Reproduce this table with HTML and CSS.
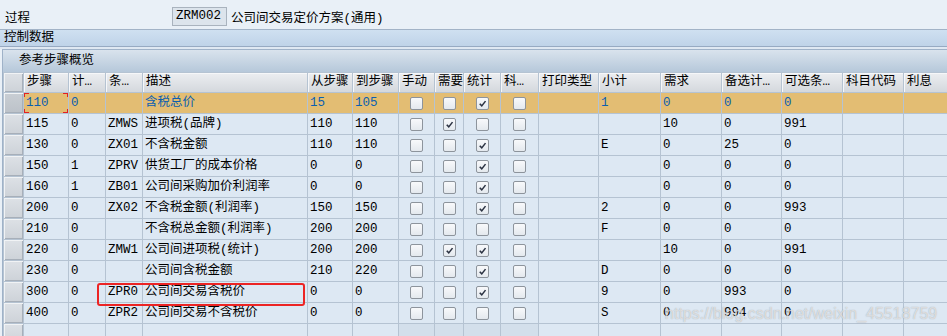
FILE: index.html
```html
<!DOCTYPE html>
<html lang="zh">
<head>
<meta charset="utf-8">
<title>参考步骤概览</title>
<link rel="stylesheet" href="styles.css">
</head>
<body>
<div class="top">
  <span class="lbl">过程</span>
  <span class="inp">ZRM002</span>
  <span class="desc">公司间交易定价方案(通用)</span>
</div>
<div class="band">控制数据</div>
<div class="sep"></div>
<div class="group">
  <div class="gtitle">参考步骤概览</div>
  <div class="tbl">
    <div class="row head">
      <div class="sel"></div><div class="h">步骤</div><div class="h">计…</div><div class="h">条…</div><div class="h">描述</div><div class="h">从步骤</div><div class="h">到步骤</div><div class="h">手动</div><div class="h">需要</div><div class="h">统计</div><div class="h">科…</div><div class="h">打印类型</div><div class="h">小计</div><div class="h">需求</div><div class="h">备选计…</div><div class="h">可选条…</div><div class="h">科目代码</div><div class="h">利息</div>
    </div>
    <div class="row cur">
      <div class="sel"></div><div class="c focus">110</div><div class="c">0</div><div class="c"></div><div class="c">含税总价</div><div class="c">15</div><div class="c">105</div><div class="c cb"><span class="box"></span></div><div class="c cb"><span class="box"></span></div><div class="c cb"><span class="box"><svg viewBox="0 0 12 12"><path d="M3 6.2 L5.2 8.6 L9.3 3.4"/></svg></span></div><div class="c cb"><span class="box"></span></div><div class="c"></div><div class="c">1</div><div class="c">0</div><div class="c">0</div><div class="c">0</div><div class="c"></div><div class="c"></div>
    </div>
    <div class="row">
      <div class="sel"></div><div class="c">115</div><div class="c">0</div><div class="c">ZMWS</div><div class="c">进项税(品牌)</div><div class="c">110</div><div class="c">110</div><div class="c cb"><span class="box"></span></div><div class="c cb"><span class="box"><svg viewBox="0 0 12 12"><path d="M3 6.2 L5.2 8.6 L9.3 3.4"/></svg></span></div><div class="c cb"><span class="box"></span></div><div class="c cb"><span class="box"></span></div><div class="c"></div><div class="c"></div><div class="c">10</div><div class="c">0</div><div class="c">991</div><div class="c"></div><div class="c"></div>
    </div>
    <div class="row">
      <div class="sel"></div><div class="c">130</div><div class="c">0</div><div class="c">ZX01</div><div class="c">不含税金额</div><div class="c">110</div><div class="c">110</div><div class="c cb"><span class="box"></span></div><div class="c cb"><span class="box"></span></div><div class="c cb"><span class="box"><svg viewBox="0 0 12 12"><path d="M3 6.2 L5.2 8.6 L9.3 3.4"/></svg></span></div><div class="c cb"><span class="box"></span></div><div class="c"></div><div class="c">E</div><div class="c">0</div><div class="c">25</div><div class="c">0</div><div class="c"></div><div class="c"></div>
    </div>
    <div class="row">
      <div class="sel"></div><div class="c">150</div><div class="c">1</div><div class="c">ZPRV</div><div class="c">供货工厂的成本价格</div><div class="c">0</div><div class="c">0</div><div class="c cb"><span class="box"></span></div><div class="c cb"><span class="box"></span></div><div class="c cb"><span class="box"><svg viewBox="0 0 12 12"><path d="M3 6.2 L5.2 8.6 L9.3 3.4"/></svg></span></div><div class="c cb"><span class="box"></span></div><div class="c"></div><div class="c"></div><div class="c">0</div><div class="c">0</div><div class="c">0</div><div class="c"></div><div class="c"></div>
    </div>
    <div class="row">
      <div class="sel"></div><div class="c">160</div><div class="c">1</div><div class="c">ZB01</div><div class="c">公司间采购加价利润率</div><div class="c">0</div><div class="c">0</div><div class="c cb"><span class="box"></span></div><div class="c cb"><span class="box"></span></div><div class="c cb"><span class="box"><svg viewBox="0 0 12 12"><path d="M3 6.2 L5.2 8.6 L9.3 3.4"/></svg></span></div><div class="c cb"><span class="box"></span></div><div class="c"></div><div class="c"></div><div class="c">0</div><div class="c">0</div><div class="c">0</div><div class="c"></div><div class="c"></div>
    </div>
    <div class="row">
      <div class="sel"></div><div class="c">200</div><div class="c">0</div><div class="c">ZX02</div><div class="c">不含税金额(利润率)</div><div class="c">150</div><div class="c">150</div><div class="c cb"><span class="box"></span></div><div class="c cb"><span class="box"></span></div><div class="c cb"><span class="box"><svg viewBox="0 0 12 12"><path d="M3 6.2 L5.2 8.6 L9.3 3.4"/></svg></span></div><div class="c cb"><span class="box"></span></div><div class="c"></div><div class="c">2</div><div class="c">0</div><div class="c">0</div><div class="c">993</div><div class="c"></div><div class="c"></div>
    </div>
    <div class="row">
      <div class="sel"></div><div class="c">210</div><div class="c">0</div><div class="c"></div><div class="c">不含税总金额(利润率)</div><div class="c">200</div><div class="c">200</div><div class="c cb"><span class="box"></span></div><div class="c cb"><span class="box"></span></div><div class="c cb"><span class="box"></span></div><div class="c cb"><span class="box"></span></div><div class="c"></div><div class="c">F</div><div class="c">0</div><div class="c">0</div><div class="c">0</div><div class="c"></div><div class="c"></div>
    </div>
    <div class="row">
      <div class="sel"></div><div class="c">220</div><div class="c">0</div><div class="c">ZMW1</div><div class="c">公司间进项税(统计)</div><div class="c">200</div><div class="c">200</div><div class="c cb"><span class="box"></span></div><div class="c cb"><span class="box"><svg viewBox="0 0 12 12"><path d="M3 6.2 L5.2 8.6 L9.3 3.4"/></svg></span></div><div class="c cb"><span class="box"><svg viewBox="0 0 12 12"><path d="M3 6.2 L5.2 8.6 L9.3 3.4"/></svg></span></div><div class="c cb"><span class="box"></span></div><div class="c"></div><div class="c"></div><div class="c">10</div><div class="c">0</div><div class="c">991</div><div class="c"></div><div class="c"></div>
    </div>
    <div class="row">
      <div class="sel"></div><div class="c">230</div><div class="c">0</div><div class="c"></div><div class="c">公司间含税金额</div><div class="c">210</div><div class="c">220</div><div class="c cb"><span class="box"></span></div><div class="c cb"><span class="box"></span></div><div class="c cb"><span class="box"><svg viewBox="0 0 12 12"><path d="M3 6.2 L5.2 8.6 L9.3 3.4"/></svg></span></div><div class="c cb"><span class="box"></span></div><div class="c"></div><div class="c">D</div><div class="c">0</div><div class="c">0</div><div class="c">0</div><div class="c"></div><div class="c"></div>
    </div>
    <div class="row">
      <div class="sel"></div><div class="c">300</div><div class="c">0</div><div class="c">ZPR0</div><div class="c">公司间交易含税价</div><div class="c">0</div><div class="c">0</div><div class="c cb"><span class="box"></span></div><div class="c cb"><span class="box"></span></div><div class="c cb"><span class="box"><svg viewBox="0 0 12 12"><path d="M3 6.2 L5.2 8.6 L9.3 3.4"/></svg></span></div><div class="c cb"><span class="box"></span></div><div class="c"></div><div class="c">9</div><div class="c">0</div><div class="c">993</div><div class="c">0</div><div class="c"></div><div class="c"></div>
    </div>
    <div class="row">
      <div class="sel"></div><div class="c">400</div><div class="c">0</div><div class="c">ZPR2</div><div class="c">公司间交易不含税价</div><div class="c">0</div><div class="c">0</div><div class="c cb"><span class="box"></span></div><div class="c cb"><span class="box"></span></div><div class="c cb"><span class="box"></span></div><div class="c cb"><span class="box"></span></div><div class="c"></div><div class="c">S</div><div class="c">0</div><div class="c">994</div><div class="c">0</div><div class="c"></div><div class="c"></div>
    </div>
    <div class="row empty">
      <div class="sel"></div><div class="c"></div><div class="c"></div><div class="c"></div><div class="c"></div><div class="c"></div><div class="c"></div><div class="c dk"></div><div class="c dk"></div><div class="c dk"></div><div class="c dk"></div><div class="c"></div><div class="c"></div><div class="c"></div><div class="c"></div><div class="c"></div><div class="c"></div><div class="c"></div>
    </div>
  </div>
</div>
<div class="mark"></div>
<div class="wm">https://blog.csdn.net/weixin_45518759</div>
</body>
</html>
```

FILE: styles.css
```css
* { box-sizing: border-box; }

body {
  margin: 0;
  width: 947px;
  height: 336px;
  overflow: hidden;
  position: relative;
  background: #e9f0f7;
  color: #000;
  font-family: "Liberation Mono", "Noto Sans CJK SC", monospace;
  font-size: 12.5px;
}

.top {
  height: 30px;
  padding-top: 4px;
  display: flex;
  align-items: center;
  border-bottom: 1px solid #a2b3c7;
}

.lbl {
  margin-left: 5px;
  width: 167px;
}

.inp {
  width: 55px;
  height: 19px;
  line-height: 17px;
  padding-left: 3px;
  border: 1px solid #a9b3be;
  background: #dce4ec;
}

.desc {
  margin-left: 4px;
}

.band {
  height: 17px;
  line-height: 16px;
  padding-left: 4px;
  background: linear-gradient(#cfe0f1, #bfd3e8);
  border-bottom: 1px solid #97aac2;
}

.sep {
  height: 2px;
  background: #dfe8f2;
}

.group {
  margin-left: 2px;
  border-top: 1px solid #9fb2c8;
  border-left: 1px solid #9fb2c8;
  background: #b5c3d2;
}

.gtitle {
  height: 22px;
  line-height: 22px;
  padding-left: 16px;
  background: linear-gradient(#d9e3ed, #b6c8da);
}

.tbl {
  display: flex;
  flex-direction: column;
  gap: 1px;
  padding: 1px 0 0 1px;
  background: #b5c3d2;
}

.row {
  display: grid;
  grid-template-columns: 19px 44px 36px 36px 164px 44px 45px 35px 28px 36px 37px 59px 61px 60px 59px 60px 60px 1fr;
  column-gap: 1px;
  height: 20px;
}

.row.head {
  height: 19px;
}

.h {
  line-height: 19px;
  padding-left: 3px;
  white-space: nowrap;
  overflow: hidden;
  background: linear-gradient(#eceef1, #d4d8dd);
  box-shadow: inset 1px 1px #f6f7f9;
}

.sel {
  background: linear-gradient(#dde1e6, #cdd2d8);
  box-shadow: inset 1px 1px #f1f3f5, inset -1px -1px #a7afb9;
}

.row.cur .sel {
  background: linear-gradient(#c9ced4, #bcc2c9);
}

.c {
  background: #dde8f3;
  line-height: 20px;
  padding-left: 2px;
  white-space: nowrap;
  overflow: hidden;
}

.row.cur .c {
  background: #e3bd73;
  color: #0b5fb0;
}

.row.cur .c.focus {
  background:
    linear-gradient(#e42121, #e42121) left top / 5px 1px no-repeat,
    linear-gradient(#e42121, #e42121) left top / 1px 4px no-repeat,
    linear-gradient(#e42121, #e42121) right top / 5px 1px no-repeat,
    linear-gradient(#e42121, #e42121) right top / 1px 4px no-repeat,
    linear-gradient(#e42121, #e42121) left bottom / 5px 1px no-repeat,
    linear-gradient(#e42121, #e42121) left bottom / 1px 4px no-repeat,
    linear-gradient(#e42121, #e42121) right bottom / 5px 1px no-repeat,
    linear-gradient(#e42121, #e42121) right bottom / 1px 4px no-repeat,
    #e3bd73;
}

.c.dk {
  background: #d3dfeb;
}

.cb {
  display: flex;
  align-items: center;
  justify-content: center;
  padding-left: 0;
}

.box {
  width: 13px;
  height: 13px;
  border: 1px solid #8d949c;
  border-radius: 2px;
  background: linear-gradient(#f8f9fb, #e4e9ee);
  display: flex;
}

.box svg {
  width: 11px;
  height: 11px;
}

.box path {
  fill: none;
  stroke: #2b3242;
  stroke-width: 1.7;
}

.mark {
  position: absolute;
  left: 97px;
  top: 283px;
  width: 208px;
  height: 23px;
  border: 2px solid #ec2424;
  border-radius: 3px;
}

.wm {
  position: absolute;
  right: 10px;
  top: 305px;
  font-family: "Liberation Sans", Arial, sans-serif;
  font-size: 16px;
  color: rgba(255, 255, 255, 0.6);
  text-shadow: 0 0 1px rgba(110, 110, 110, 0.6);
}
```
